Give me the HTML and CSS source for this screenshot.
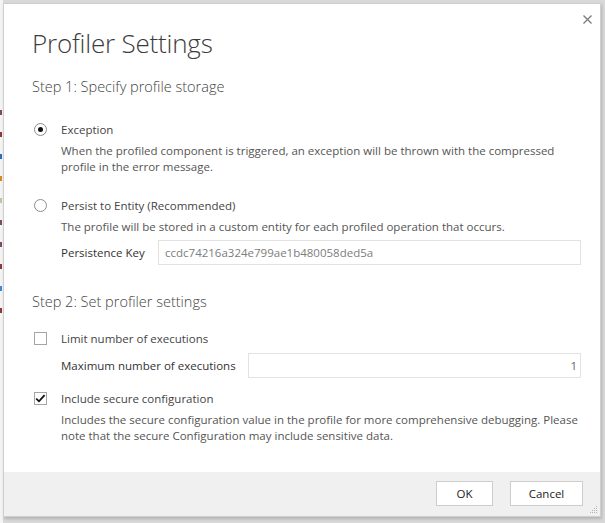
FILE: index.html
```html
<!DOCTYPE html>
<html lang="en">
<head>
<meta charset="utf-8">
<title>Profiler Settings</title>
<link rel="stylesheet" href="styles.css">
</head>
<body>
<div class="backdrop">
  <div class="bg-marks">
    <span class="mk mk-a"></span><span class="mk mk-b"></span><span class="mk mk-c"></span><span class="mk mk-d"></span><span class="mk mk-e"></span><span class="mk mk-a"></span><span class="mk mk-a"></span><span class="mk mk-b"></span><span class="mk mk-f"></span><span class="mk mk-b"></span>
  </div>
  <div class="dialog">
    <button class="close" aria-label="Close">
      <svg width="9" height="9" viewBox="0 0 9 9"><path d="M0.5 0.5L8.5 8.5M8.5 0.5L0.5 8.5" stroke="#7a7a7a" stroke-width="1.3" fill="none"/></svg>
    </button>
    <div class="body">
      <h1 class="title">Profiler Settings</h1>
      <h2 class="step">Step 1: Specify profile storage</h2>

      <div class="option">
        <span class="radio checked"></span>
        <div class="opt-main">
          <div class="opt-label">Exception</div>
          <div class="desc">When the profiled component is triggered, an exception will be thrown with the compressed profile in the error message.</div>
        </div>
      </div>

      <div class="option opt-2">
        <span class="radio"></span>
        <div class="opt-main">
          <div class="opt-label">Persist to Entity (Recommended)</div>
          <div class="desc">The profile will be stored in a custom entity for each profiled operation that occurs.</div>
          <div class="field key-field">
            <label class="field-label">Persistence Key</label>
            <div class="input key-input">ccdc74216a324e799ae1b480058ded5a</div>
          </div>
        </div>
      </div>

      <h2 class="step step-2">Step 2: Set profiler settings</h2>

      <div class="option opt-check">
        <span class="check"></span>
        <div class="opt-main">
          <div class="opt-label">Limit number of executions</div>
          <div class="field max-field">
            <label class="field-label">Maximum number of executions</label>
            <div class="input num-input">1</div>
          </div>
        </div>
      </div>

      <div class="option opt-check opt-secure">
        <span class="check checked">
          <svg width="11" height="9" viewBox="0 0 11 9"><path d="M1.2 4.6L4 7.3L9.6 1.2" stroke="#111" stroke-width="1.8" fill="none"/></svg>
        </span>
        <div class="opt-main">
          <div class="opt-label">Include secure configuration</div>
          <div class="desc">Includes the secure configuration value in the profile for more comprehensive debugging. Please note that the secure Configuration may include sensitive data.</div>
        </div>
      </div>
    </div>
    <div class="footer">
      <button class="btn btn-ok">OK</button>
      <button class="btn btn-cancel">Cancel</button>
      <svg class="grip" width="8" height="8" viewBox="0 0 8 8">
        <rect x="6" y="0" width="1" height="1" fill="#b5b5b5"/>
        <rect x="4" y="2" width="1" height="1" fill="#b5b5b5"/><rect x="6" y="2" width="1" height="1" fill="#b5b5b5"/>
        <rect x="2" y="4" width="1" height="1" fill="#b5b5b5"/><rect x="4" y="4" width="1" height="1" fill="#b5b5b5"/><rect x="6" y="4" width="1" height="1" fill="#b5b5b5"/>
        <rect x="0" y="6" width="1" height="1" fill="#b5b5b5"/><rect x="2" y="6" width="1" height="1" fill="#b5b5b5"/><rect x="4" y="6" width="1" height="1" fill="#b5b5b5"/><rect x="6" y="6" width="1" height="1" fill="#b5b5b5"/>
      </svg>
    </div>
  </div>
</div>
</body>
</html>
```
FILE: styles.css
```css
* { box-sizing: border-box; }
html, body { margin: 0; padding: 0; }
body {
  width: 605px;
  height: 523px;
  overflow: hidden;
  background: #e3e3e3;
  font-family: "Open Sans", "Noto Sans", sans-serif;
  color: #444;
}
.backdrop {
  position: relative;
  width: 605px;
  height: 523px;
  padding: 3px 0 0 3px;
  background: linear-gradient(to right, #f4f4f4 0, #f4f4f4 3px, #d9d9d9 3px);
}
.bg-marks {
  position: absolute;
  left: 0;
  top: 110px;
  width: 3px;
  display: flex;
  flex-direction: column;
  gap: 17px;
}
.mk { display: block; width: 2px; height: 5px; }
.mk-a { background: #7a4a6a; }
.mk-b { background: #8a3a3a; }
.mk-c { background: #2b6cc4; }
.mk-d { background: #d88a20; }
.mk-e { background: #b8c8a0; }
.mk-f { background: #3a8ad8; }

.dialog {
  position: relative;
  width: 598px;
  height: 514px;
  background: #fff;
  border: 1px solid #cfcfcf;
  box-shadow: 1px 2px 3px rgba(0,0,0,0.18);
  display: flex;
  flex-direction: column;
}
.close {
  position: absolute;
  top: 9px;
  right: 6px;
  width: 13px;
  height: 13px;
  padding: 0;
  border: 0;
  background: none;
  display: flex;
  align-items: center;
  justify-content: center;
}
.body {
  flex: 1;
  padding: 21px 19px 0 28px;
}
.title {
  margin: 0;
  font-weight: 300;
  font-size: 26px;
  line-height: 36px;
  color: #3c3c3c;
  letter-spacing: -0.2px;
}
.step {
  margin: 16px 0 0 0;
  font-weight: 300;
  font-size: 14.5px;
  line-height: 20px;
  color: #444;
}
.step-2 { margin-top: 27px; }

.option {
  display: flex;
  margin-top: 23px;
}
.opt-2 { margin-top: 21px; }
.opt-check { margin-top: 17px; }
.opt-secure { margin-top: 11px; }
.radio {
  flex: none;
  width: 13px;
  height: 13px;
  margin: 3px 14px 0 2px;
  border: 1px solid #8d8d8d;
  border-radius: 50%;
  display: flex;
  align-items: center;
  justify-content: center;
}
.radio.checked::after {
  content: "";
  width: 5px;
  height: 5px;
  border-radius: 50%;
  background: #111;
}
.check {
  flex: none;
  width: 13px;
  height: 13px;
  margin: 3px 14px 0 2px;
  border: 1px solid #a5a5a5;
  display: flex;
  align-items: center;
  justify-content: center;
}
.opt-main { flex: 1; }
.opt-label {
  font-size: 11.5px;
  line-height: 19px;
  color: #444;
}
.desc {
  margin-top: 4px;
  font-size: 11.5px;
  line-height: 16px;
  color: #555;
}
.field {
  display: flex;
  align-items: center;
  margin-top: 5px;
}
.key-field { margin-top: 5px; }
.max-field { margin-top: 5px; }
.field-label {
  font-size: 11.5px;
  color: #333;
}
.key-field .field-label { width: 97px; }
.max-field .field-label { width: 187px; }
.input {
  flex: 1;
  height: 25px;
  border: 1px solid #e2e2e2;
  font-size: 11.5px;
  line-height: 23px;
  padding: 0 6px;
}
.key-input { color: #7d7d7d; }
.num-input { text-align: right; color: #666; padding-right: 3px; }

.footer {
  flex: none;
  height: 44px;
  background: #f0f0f0;
  display: flex;
  align-items: center;
  justify-content: flex-end;
  gap: 17px;
  padding: 0 17px 1px 0;
  position: relative;
}
.btn {
  height: 25px;
  background: #fff;
  border: 1px solid #cdcdcd;
  font-family: inherit;
  font-size: 11.5px;
  color: #222;
  padding: 0;
}
.btn-ok { width: 57px; }
.btn-cancel { width: 73px; }
.grip {
  position: absolute;
  right: 2px;
  bottom: 2px;
}
```
